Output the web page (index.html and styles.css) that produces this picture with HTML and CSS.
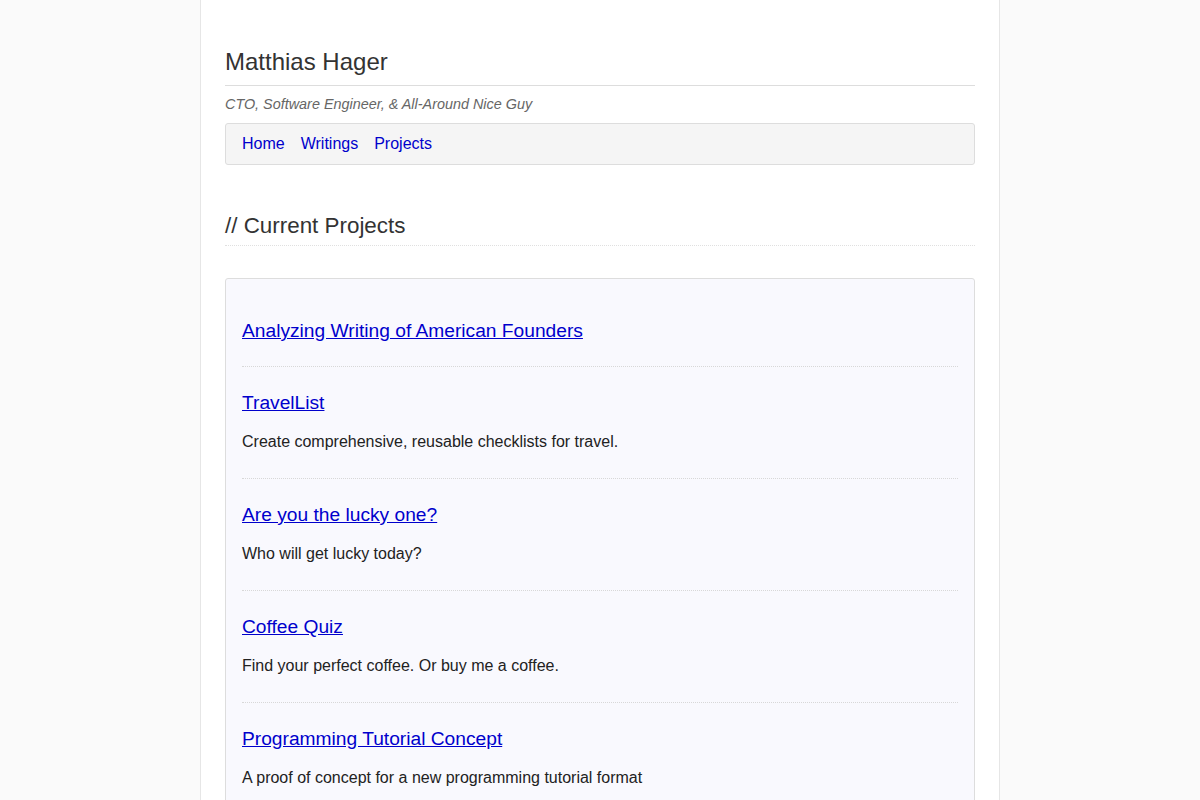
FILE: index.html
```html
<!DOCTYPE html>
<html lang="en">
<head>
    <meta charset="UTF-8">
    <meta name="viewport" content="width=device-width, initial-scale=1.0">
    <title>Projects - Matthias Hager</title>
    <link rel="stylesheet" href="styles.css">
</head>
<body>
    <div class="page">
        <header class="masthead">
            <h1>Matthias Hager</h1>
            <p class="tagline">CTO, Software Engineer, &amp; All-Around Nice Guy</p>
            <nav class="nav">
                <a href="#">Home</a>
                <a href="#">Writings</a>
                <a href="#">Projects</a>
            </nav>
        </header>

        <h2 class="section-title">// Current Projects</h2>

        <div class="projects">
            <div class="project">
                <h3><a href="#">Analyzing Writing of American Founders</a></h3>
            </div>
            <div class="project">
                <h3><a href="#">TravelList</a></h3>
                <p>Create comprehensive, reusable checklists for travel.</p>
            </div>
            <div class="project">
                <h3><a href="#">Are you the lucky one?</a></h3>
                <p>Who will get lucky today?</p>
            </div>
            <div class="project">
                <h3><a href="#">Coffee Quiz</a></h3>
                <p>Find your perfect coffee. Or buy me a coffee.</p>
            </div>
            <div class="project">
                <h3><a href="#">Programming Tutorial Concept</a></h3>
                <p>A proof of concept for a new programming tutorial format</p>
            </div>
        </div>
    </div>
</body>
</html>
```

FILE: styles.css
```css
* { margin: 0; padding: 0; box-sizing: border-box; }
body {
    font-family: "Liberation Sans", Arial, sans-serif;
    background: #fafafa;
    color: #222;
}
.page {
    width: 800px;
    min-height: 100vh;
    margin: 0 auto;
    background: white;
    border-left: 1px solid #e6e6e6;
    border-right: 1px solid #e6e6e6;
    padding: 47px 24px 0;
}
.masthead h1 {
    font-size: 24px;
    font-weight: normal;
    color: #333;
    line-height: 30px;
    padding-bottom: 8px;
    border-bottom: 1px solid #ddd;
}
.tagline {
    font-size: 14.4px;
    font-style: italic;
    color: #666;
    margin-top: 10px;
    line-height: 16px;
}
.nav {
    display: flex;
    gap: 16px;
    margin-top: 11px;
    padding: 10px 16px;
    background: #f5f5f5;
    border: 1px solid #ddd;
    border-radius: 3px;
}
.nav a {
    color: #0000cc;
    text-decoration: none;
    font-size: 16px;
    line-height: 20px;
}
.section-title {
    font-size: 22.4px;
    font-weight: normal;
    color: #333;
    margin-top: 48px;
    line-height: 26px;
    padding-bottom: 6px;
    border-bottom: 1px dotted #e0e0e0;
}
.projects {
    margin-top: 32px;
    background: #f9f9fe;
    border: 1px solid #ddd;
    border-radius: 3px;
    padding: 16px 16px 0;
}
.project {
    padding: 25px 0 24px;
    border-bottom: 1px dotted #d8d8d8;
}
.project h3 {
    font-size: 19.2px;
    font-weight: normal;
    line-height: 22px;
}
.project h3 a { color: #0000cc; }
.project p {
    font-size: 16px;
    line-height: 18px;
    margin-top: 19px;
    margin-bottom: 3px;
    color: #222;
}
```
